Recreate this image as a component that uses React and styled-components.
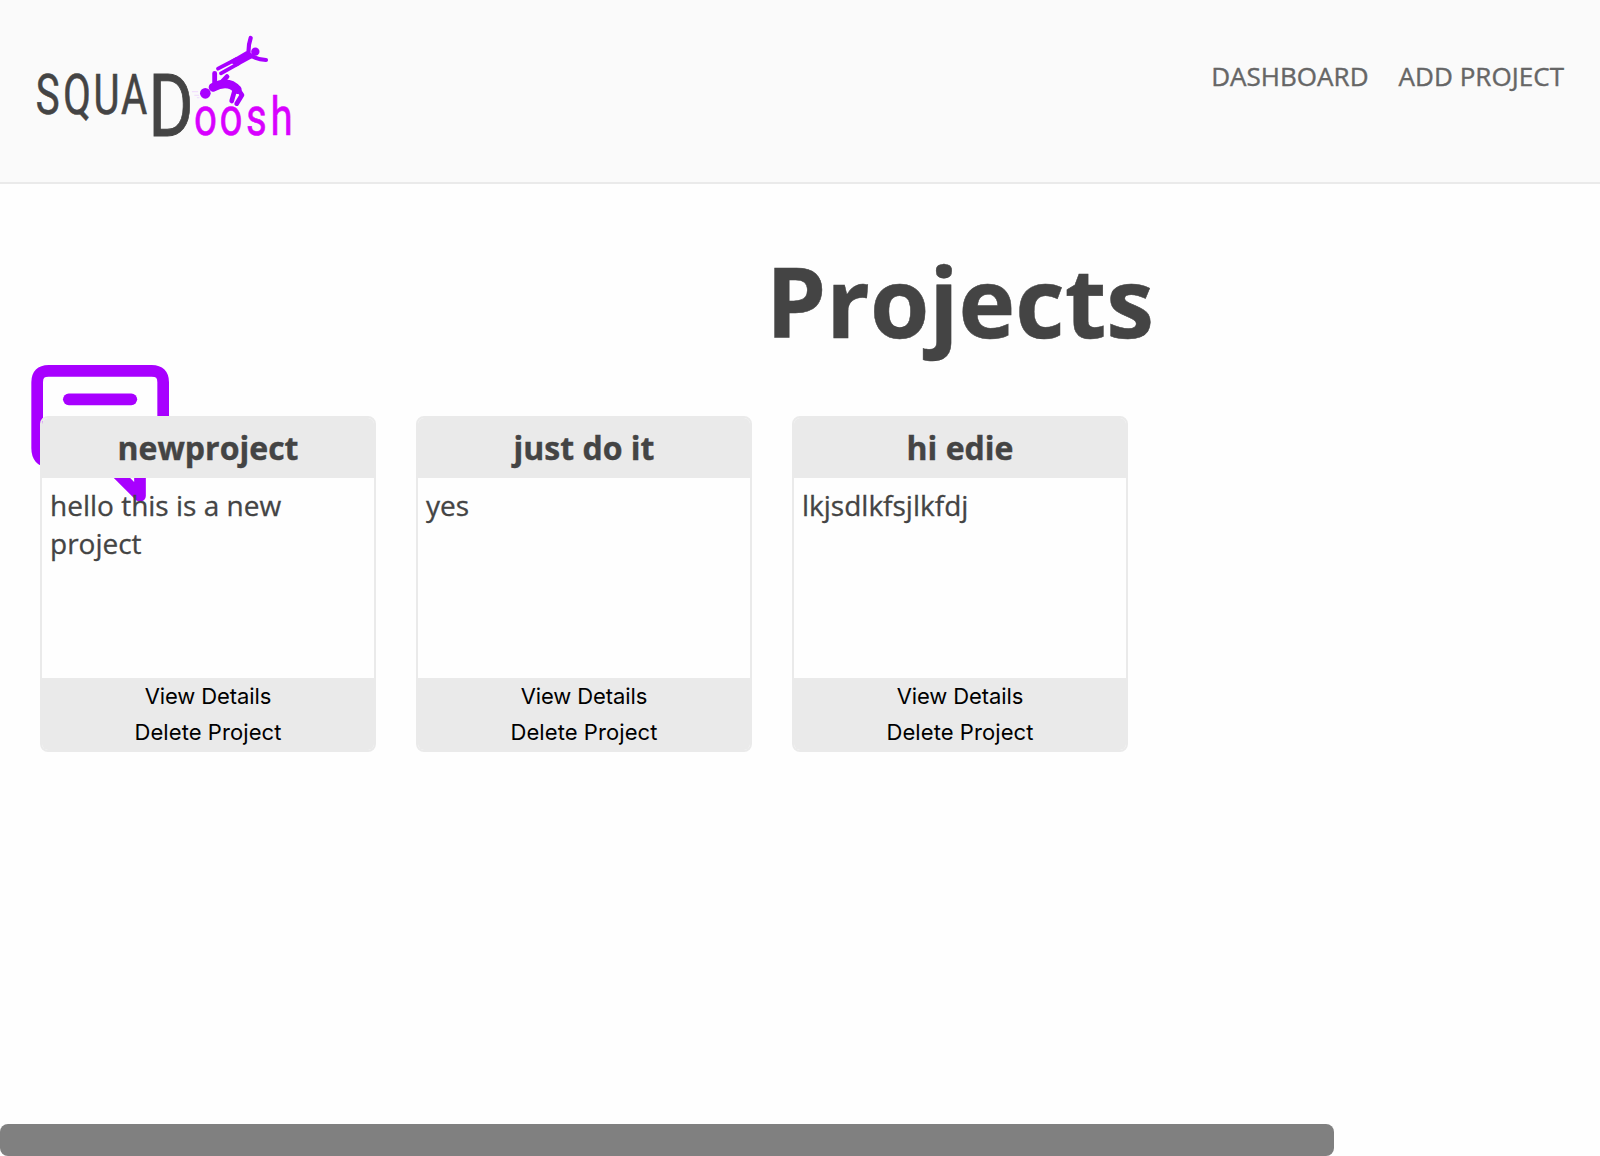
import React from "react";
import styled, { createGlobalStyle } from "styled-components";

const purple = "#a800ff";
const grey = "#eaeaea";

const GlobalStyle = createGlobalStyle`
  * { box-sizing: border-box; }
  body {
    margin: 0;
    background: #fefefe;
    color: #444;
    font-family: "Open Sans", "Noto Sans", sans-serif;
  }
`;

const Page = styled.div`
  display: flex;
  flex-direction: column;
  height: 1156px;
  overflow: hidden;
`;

const Header = styled.header`
  display: flex;
  justify-content: space-between;
  align-items: flex-start;
  height: 184px;
  padding: 20px 36px 0 20px;
  background: #fafafa;
  border-bottom: 2px solid ${grey};
`;

const LogoArt = styled.svg`
  width: 290px;
  height: 150px;
  font-family: Roboto, sans-serif;
`;

const Nav = styled.nav`
  display: flex;
  gap: 30px;
  padding-top: 38px;
`;

const NavLink = styled.a`
  font-size: 26px;
  line-height: 36px;
  letter-spacing: 0.04px;
  color: #666;
  text-transform: uppercase;
  -webkit-text-stroke: 0.4px #666;
`;

const Main = styled.main`
  flex: 1;
`;

const Title = styled.h1`
  margin: 0;
  padding: 51px 0 0 766px;
  height: 181px;
  font-size: 96px;
  line-height: 131px;
  font-weight: 700;
  -webkit-text-stroke: 0.5px #444;
`;

const BubbleIcon = styled.svg`
  display: block;
  width: 138px;
  height: 138px;
  margin: 0 0 -87px 31px;
`;

const Cards = styled.section`
  position: relative;
  display: flex;
  gap: 40px;
  padding-left: 40px;
`;

const Card = styled.article`
  display: flex;
  flex-direction: column;
  width: 336px;
  height: 336px;
  border: 2px solid ${grey};
  border-radius: 8px;
`;

const CardTitle = styled.h2`
  margin: 0;
  height: 60px;
  background: ${grey};
  border-radius: 6px 6px 0 0;
  font-size: 32px;
  line-height: 60px;
  font-weight: 700;
  text-align: center;
  -webkit-text-stroke: 0.4px #444;
`;

const CardText = styled.p`
  flex: 1;
  margin: 0;
  padding: 8px;
  font-size: 28px;
  line-height: 38px;
  -webkit-text-stroke: 0.3px #444;
`;

const CardFooter = styled.footer`
  display: flex;
  flex-direction: column;
  height: 72px;
  background: ${grey};
  border-radius: 0 0 6px 6px;
`;

const CardButton = styled.button`
  height: 36px;
  padding: 0;
  border: 0;
  background: none;
  color: #000;
  font-family: Inter, sans-serif;
  font-size: 22px;
  line-height: 36px;
  letter-spacing: ${(p) => p.$tracking};
`;

const BottomBar = styled.div`
  width: 1334px;
  height: 32px;
  background: #808080;
  border-radius: 8px;
`;

const at = (origin, scale) => origin.map((x) => ((x - 20) / scale).toFixed(2)).join(" ");

function Logo() {
  return (
    <LogoArt viewBox="0 0 290 150">
      <text transform="translate(0 93.5) scale(.73 1)" x={at([35.7, 63.2, 93.6, 121.1], 0.73)} fontSize="55" fill="#444" stroke="#444" strokeWidth=".6">SQUA</text>
      <text transform="translate(0 115.6) scale(.79 1)" x={at([148.2], 0.79)} fontSize="87.6" fill="#444" stroke="#444" strokeWidth=".9">D</text>
      <text transform="translate(0 114.6) scale(.76 1)" x={at([194.1, 219.4, 246.1, 270.5], 0.76)} fontSize="53" fill="#d800ff" stroke="#d800ff" strokeWidth=".6">oosh</text>
      <g transform="scale(.33333)" fill="none" stroke={purple} strokeWidth="12.500" strokeLinecap="round" strokeLinejoin="round">
        <circle cx="706" cy="95" r="12.500" fill={purple} stroke="none" />
        <path d="M692 54Q684 78 686 102Q708 119 738 120" />
        <path d="M680 97 634 124 650 136 694 112Z" fill={purple} strokeWidth="7" />
        <path d="M594 146 650 117M603 160 655 131" strokeWidth="11.500" />
        <circle cx="556" cy="220" r="16" fill={purple} stroke="none" />
        <path d="M584 160V192M621 170 602 190" strokeWidth="14.500" />
        <path d="M579 202Q625 178 652 209" strokeWidth="26" />
        <path d="M645 208 641 222 635 243M652 205 666 225 650 251" strokeWidth="14" />
        <path d="M517 215H533M524 226H536M532 233H537" stroke="#ecc8ff" strokeWidth="2" />
      </g>
    </LogoArt>
  );
}

function Bubble() {
  return (
    <BubbleIcon viewBox="33 45 414 414" fill="none" stroke={purple} strokeWidth="35" strokeLinecap="round" strokeLinejoin="round">
      <path d="M146.500 148H334" />
      <path d="M360 335H395Q429.500 332 429.500 295V97Q429.500 62.500 395 62.500H86Q51.500 62.500 51.500 97V295Q51.500 332 86 335H257L360 438Z" />
    </BubbleIcon>
  );
}

const projects = [
  { name: "newproject", text: "hello this is a new project" },
  { name: "just do it", text: "yes" },
  { name: "hi edie", text: "lkjsdlkfsjlkfdj" },
];

export default function App() {
  return (
    <Page>
      <GlobalStyle />
      <Header>
        <Logo />
        <Nav>
          <NavLink>Dashboard</NavLink>
          <NavLink>Add Project</NavLink>
        </Nav>
      </Header>
      <Main>
        <Title>Projects</Title>
        <Bubble />
        <Cards>
          {projects.map((p) => (
            <Card key={p.name}>
              <CardTitle>{p.name}</CardTitle>
              <CardText>{p.text}</CardText>
              <CardFooter>
                <CardButton $tracking="-0.1px">View Details</CardButton>
                <CardButton $tracking="0.07px">Delete Project</CardButton>
              </CardFooter>
            </Card>
          ))}
        </Cards>
      </Main>
      <BottomBar />
    </Page>
  );
}
